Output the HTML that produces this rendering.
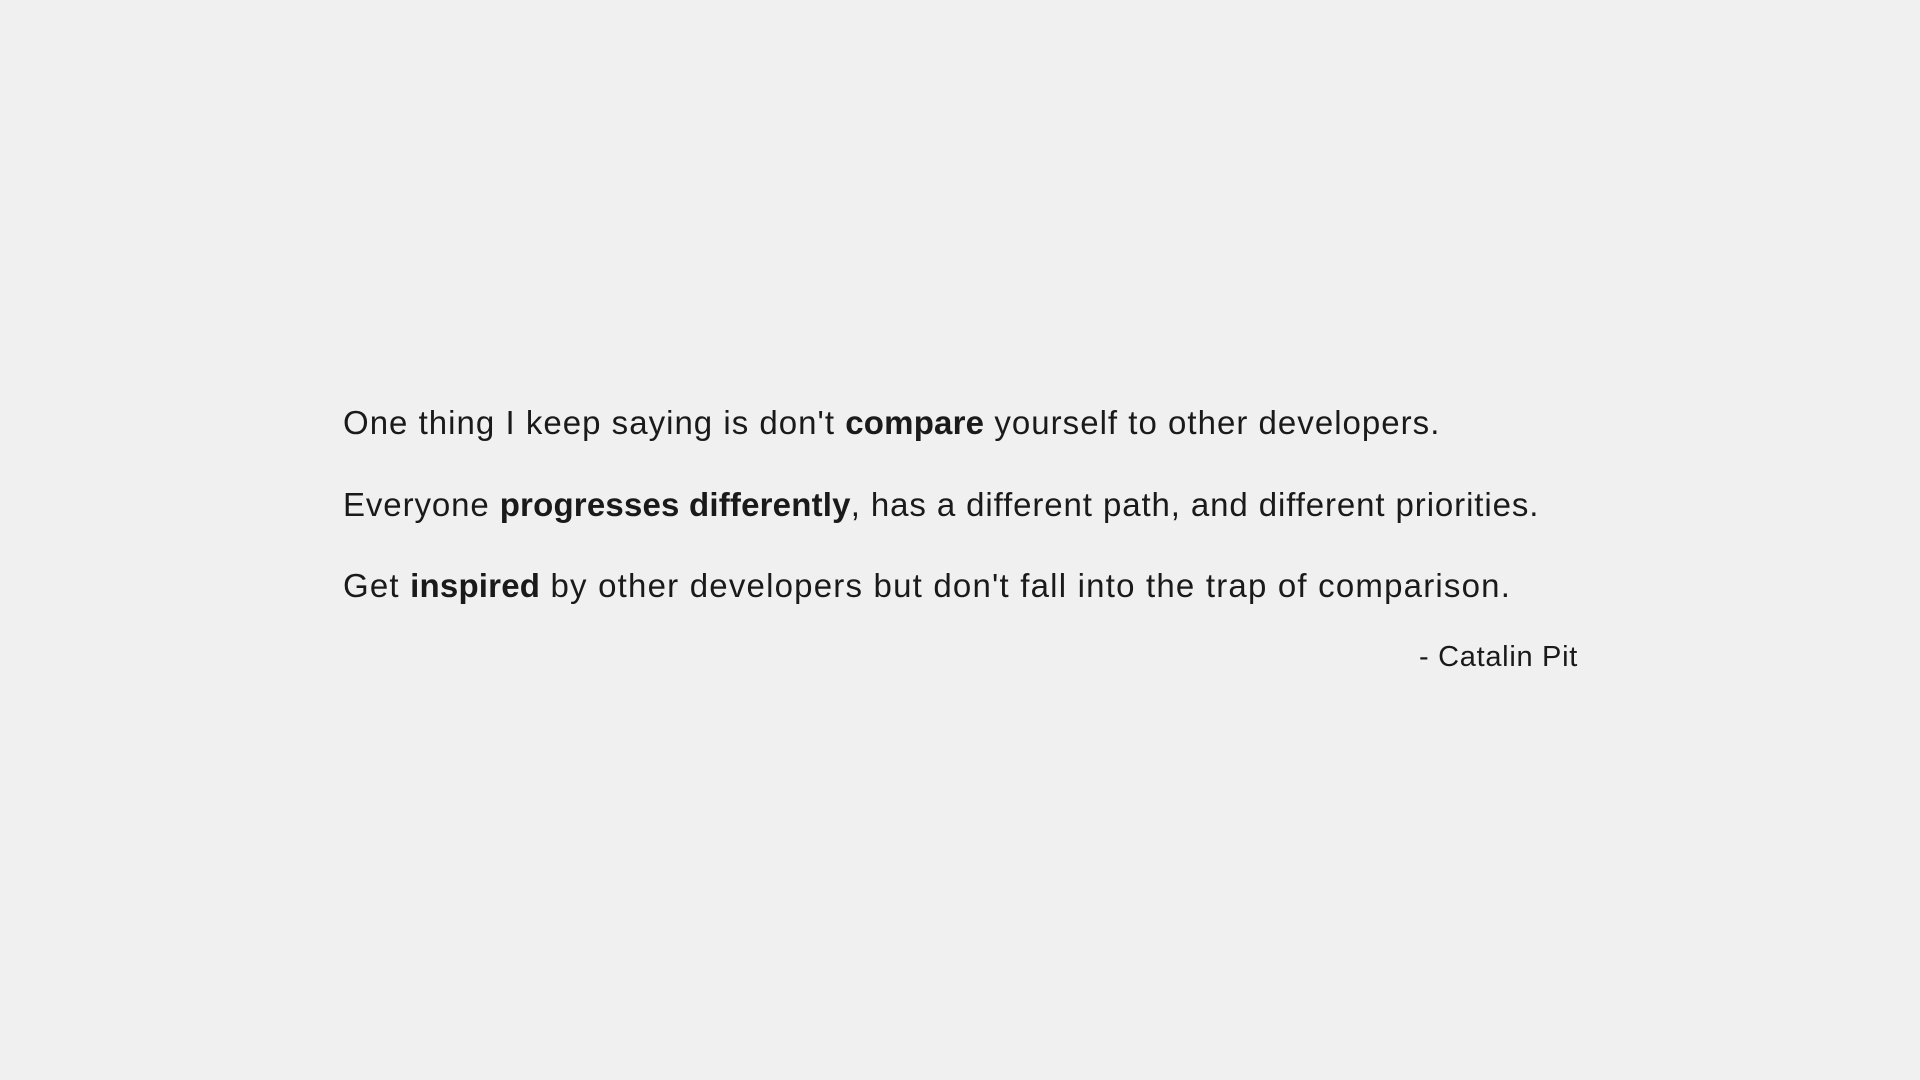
<!DOCTYPE html>
<html><head><meta charset="utf-8"><style>
html,body{margin:0;padding:0;background:#f0f0f0;width:1920px;height:1080px;overflow:hidden}
body{font-family:"Liberation Sans",sans-serif;color:#1a1a1a}
.l{position:absolute;left:343px;font-size:33px;letter-spacing:0.9px;white-space:nowrap;line-height:1}
b{font-weight:bold;letter-spacing:0.2px}
.a{position:absolute;right:342px;font-size:29px;letter-spacing:0.7px;line-height:1;white-space:nowrap}
</style></head><body>
<div class="l" style="top:406px;letter-spacing:1.02px">One thing I keep saying is don't <b>compare</b> yourself to other developers.</div>
<div class="l" style="top:488px">Everyone <b>progresses differently</b>, has a different path, and different priorities.</div>
<div class="l" style="top:569px;letter-spacing:1.2px">Get <b>inspired</b> by other developers but don't fall into the trap of comparison.</div>
<div class="a" style="top:643px">- Catalin Pit</div>
</body></html>
